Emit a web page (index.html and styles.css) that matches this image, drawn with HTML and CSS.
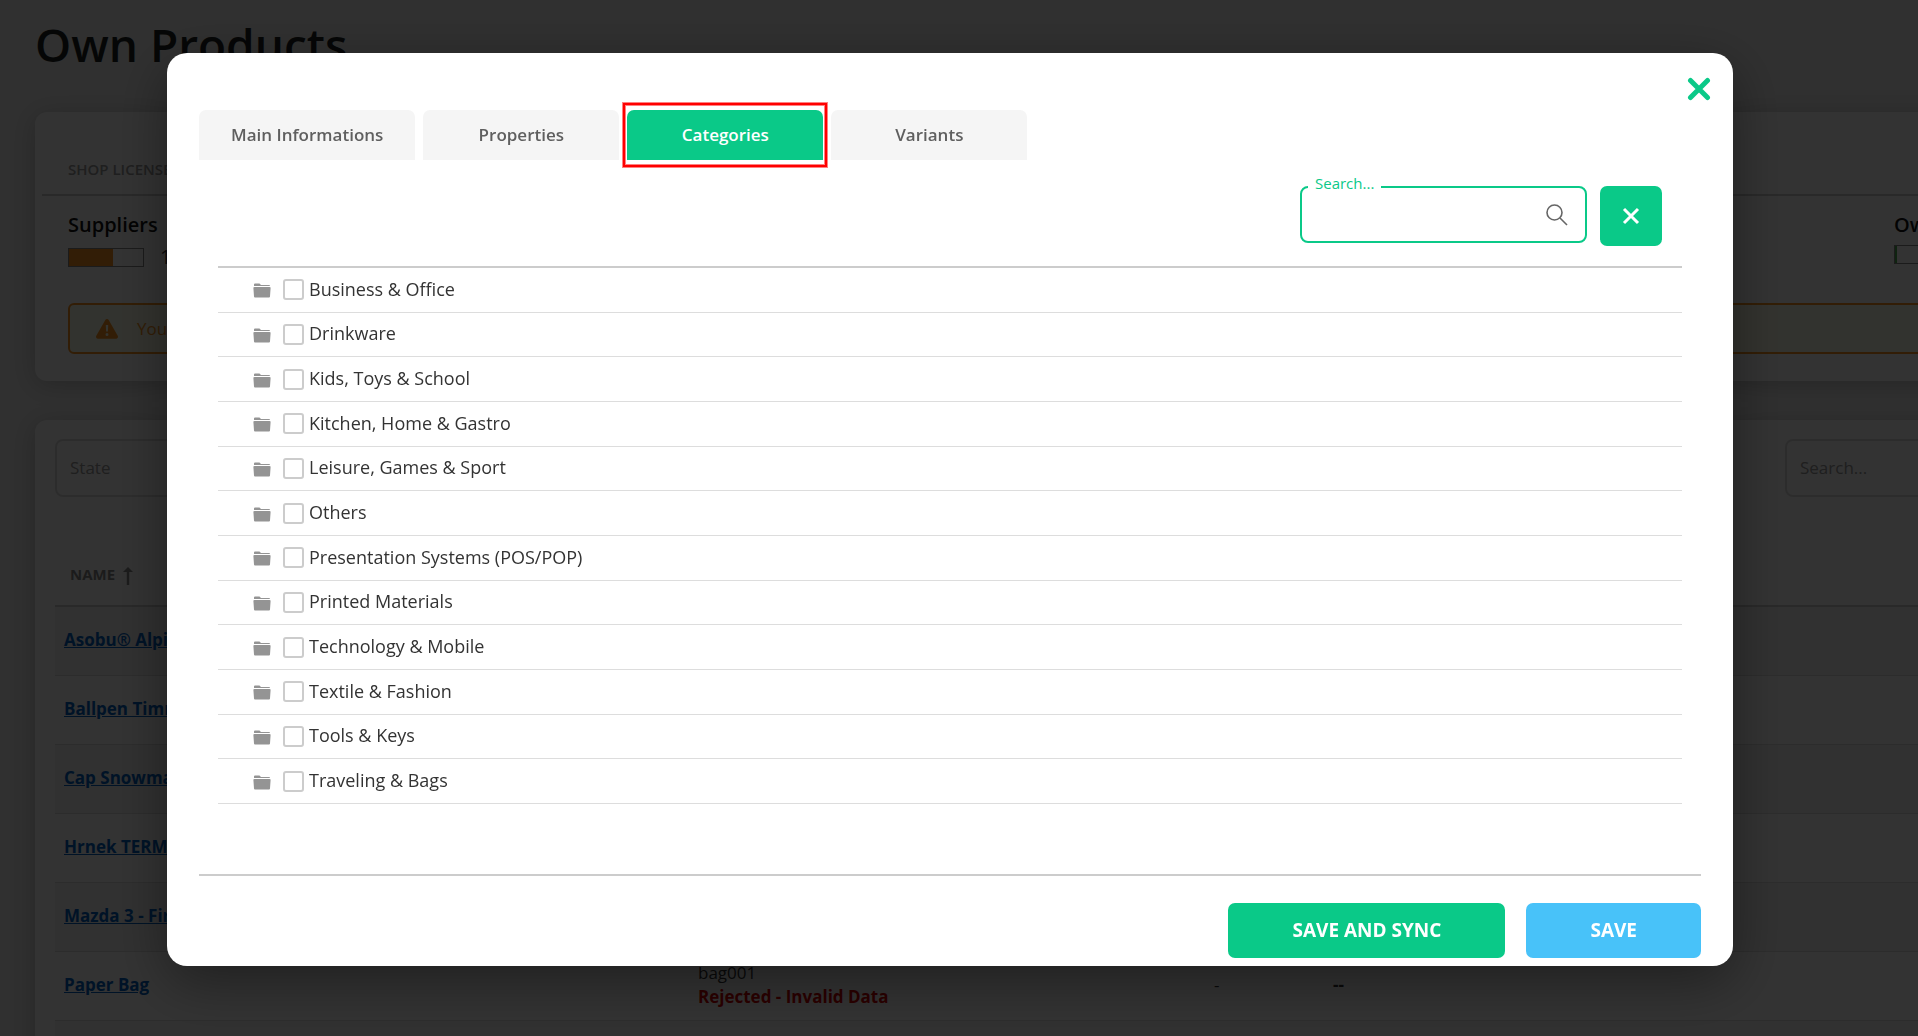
FILE: index.html
```
<!DOCTYPE html>
<html lang="en">
  <head>
    <meta charset="UTF-8">
    <meta name="viewport" content="width=device-width, initial-scale=1.0">
    <title>Own Products</title>

    <link rel="stylesheet" href="styles.css">
  </head>

  <body>
    <main class="page">
      <h1 class="page-title">Own Products</h1>

      <section class="card license">
        <h2 class="license-title">SHOP LICENSE</h2>
        <div class="license-items">
          <div class="license-item">
            <h3>Suppliers</h3>
            <div class="usage">
              <div class="bar"><div class="bar-fill" style="width: 60%"></div></div>
              <span>12 / 20</span>
            </div>
          </div>
          <div class="license-item">
            <h3>Own</h3>
            <div class="usage">
              <div class="bar bar-ok"><div class="bar-fill" style="width: 3%"></div></div>
            </div>
          </div>
        </div>
        <div class="warning">
          <svg width="22" height="20" viewBox="0 0 22 20">
            <path fill="currentColor" fill-rule="evenodd" d="M9.3 1a2 2 0 0 1 3.4 0l9 15.800a2 2 0 0 1-1.700 3H2a2 2 0 0 1-1.700-3zM9.800 6l.3 6.500h1.800l.3-6.500zM11 14a1.500 1.500 0 1 0 0 3a1.500 1.500 0 0 0 0-3z"/>
          </svg>
          <span>You</span>
        </div>
      </section>

      <section class="card products">
        <div class="filters">
          <input class="filter" type="text" placeholder="State" aria-label="State">
          <input class="filter" type="text" placeholder="Search..." aria-label="Search products">
        </div>
        <table class="product-table">
          <thead>
            <tr>
              <th class="col-name">NAME
                <svg width="10" height="18" viewBox="0 0 10 18"><path d="M5 18V3" stroke="currentColor" stroke-width="2.500"/><path d="M5 0L10 5H0Z" fill="currentColor"/></svg>
              </th>
              <th class="col-code"></th>
              <th class="col-stock"></th>
              <th></th>
            </tr>
          </thead>
          <tbody>
            <tr><td><a href="#">Asobu® Alpine</a></td><td></td><td></td><td></td></tr>
            <tr><td><a href="#">Ballpen Timmy</a></td><td></td><td></td><td></td></tr>
            <tr><td><a href="#">Cap Snowman</a></td><td></td><td></td><td></td></tr>
            <tr><td><a href="#">Hrnek TERMO</a></td><td></td><td></td><td></td></tr>
            <tr><td><a href="#">Mazda 3 - Firm</a></td><td></td><td></td><td></td></tr>
            <tr>
              <td><a href="#">Paper Bag</a></td>
              <td>bag001<br><strong class="rejected">Rejected - Invalid Data</strong></td>
              <td>-</td>
              <td><strong>--</strong></td>
            </tr>
            <tr><td></td><td>123<br>&nbsp;</td><td></td><td></td></tr>
          </tbody>
        </table>
      </section>
    </main>

    <div class="overlay">
      <div class="modal" role="dialog" aria-label="Edit product">
        <button class="close" type="button" aria-label="Close">
          <svg width="24" height="24" viewBox="0 0 24 24"><path d="M3.500 3.500L20.500 20.500M20.500 3.500L3.500 20.500" stroke="currentColor" stroke-width="5" stroke-linecap="round"/></svg>
        </button>

        <nav class="tabs">
          <button class="tab" type="button">Main Informations</button>
          <button class="tab" type="button">Properties</button>
          <button class="tab active" type="button">Categories</button>
          <button class="tab" type="button">Variants</button>
        </nav>

        <div class="content">
          <div class="search-row">
            <div class="search">
              <label for="category-search">Search...</label>
              <input id="category-search" type="text">
              <svg width="22" height="22" viewBox="0 0 22 22"><g fill="none" stroke="currentColor" stroke-width="1.600"><circle cx="8.500" cy="8.500" r="7.500"/><path d="M14 14L21 21"/></g></svg>
            </div>
            <button class="clear" type="button" aria-label="Clear search">
              <svg width="18" height="18" viewBox="0 0 18 18"><path d="M2 2L16 16M16 2L2 16" stroke="currentColor" stroke-width="3"/></svg>
            </button>
          </div>

          <ul class="categories" id="categories"></ul>
        </div>

        <div class="actions">
          <button class="btn btn-sync" type="button">SAVE AND SYNC</button>
          <button class="btn btn-save" type="button">SAVE</button>
        </div>
      </div>
    </div>

    <script>
      const categories = [
        'Business & Office',
        'Drinkware',
        'Kids, Toys & School',
        'Kitchen, Home & Gastro',
        'Leisure, Games & Sport',
        'Others',
        'Presentation Systems (POS/POP)',
        'Printed Materials',
        'Technology & Mobile',
        'Textile & Fashion',
        'Tools & Keys',
        'Traveling & Bags',
      ];
      const folderIcon = '<svg width="18" height="15" viewBox="0 0 18 15"><path fill="currentColor" d="M1 3V1.500Q1 .5 2 .5H6.500L8 2H16Q17 2 17 3ZM1.500 4H16.500Q17.700 4 17.600 5L17 13.500Q17 14.500 16 14.500H2Q1 14.500 1 13.500L.4 5Q.3 4 1.500 4Z"/></svg>';

      categories.forEach((name, index) => {
        const item = document.createElement('li');
        item.className = 'category';
        item.innerHTML = `${folderIcon}<input type="checkbox" id="category${index}"><label for="category${index}"></label>`;
        item.querySelector('label').innerText = name;
        document.querySelector('#categories').appendChild(item);
      });
    </script>
  </body>
</html>
```
FILE: styles.css
```
* {
  box-sizing: border-box;
}

body {
  margin: 0;
  height: 100vh;
  overflow: hidden;
  background-color: #eee;
  color: #333;
  font-family: "Open Sans", "Noto Sans", sans-serif;
  font-size: 17px;
  line-height: 24px;
}

button, input {
  font: inherit;
  color: inherit;
}

button {
  border: 0;
  padding: 0;
  cursor: pointer;
}

svg {
  display: block;
  flex: none;
}

/* Page behind the dialog */
.page {
  padding: 12px 0 0 35px;
}

.page-title {
  margin: 0 0 36px 0;
  color: #1c1f22;
  font-size: 46px;
  font-weight: 600;
  line-height: 64px;
}

.card {
  margin-right: -35px;
  border-radius: 12px;
  background-color: #fff;
  box-shadow: 0 4px 24px rgba(0, 0, 0, 0.2);
}

.license {
  height: 269px;
  margin-bottom: 39px;
  padding: 45px 0 0 7px;
}

.license-title {
  margin: 0;
  padding: 0 0 13px 26px;
  border-bottom: 2px solid #ccc;
  color: #999;
  font-size: 15px;
  font-weight: 600;
}

.license-items {
  display: flex;
  justify-content: space-between;
  padding: 17px 0 0 26px;
}

.license-item {
  width: 94px;
  white-space: nowrap;
}

.license-item:last-child {
  width: 59px;
}

.license-item h3 {
  margin: 0 0 8px;
  color: #111;
  font-size: 20px;
  font-weight: 600;
}

.usage {
  display: flex;
  align-items: center;
  gap: 16px;
  font-size: 20px;
}

.bar {
  flex: none;
  width: 76px;
  height: 19px;
  border: 1px solid #888;
}

.bar-fill {
  height: 100%;
  background-color: #f7931e;
}

.bar-ok .bar-fill {
  background-color: #4caf50;
}

.warning {
  display: flex;
  align-items: center;
  gap: 19px;
  height: 51px;
  margin: 34px 0 0 26px;
  padding: 0 26px;
  border: 2px solid #f7931e;
  border-radius: 6px;
  background-color: #fbfde8;
  color: #f7931e;
}

.products {
  height: 700px;
  padding: 19px 0 0 20px;
}

.filters {
  display: flex;
  justify-content: space-between;
}

.filter {
  width: 260px;
  height: 58px;
  padding: 0 13px 2px;
  border: 2px solid #ddd;
  border-radius: 8px;
  background: none;
}

.filter:last-child {
  width: 168px;
}

.filter::placeholder {
  color: #999;
  opacity: 1;
}

.product-table {
  width: 100%;
  margin-top: 48px;
  border-collapse: separate;
  border-spacing: 0;
  table-layout: fixed;
}

.product-table th {
  height: 62px;
  padding: 0 15px 2px;
  border-bottom: 2px solid #ccc;
  color: #888;
  font-size: 15px;
  text-align: left;
}

.product-table th svg {
  display: inline-block;
  margin-left: 4px;
  vertical-align: middle;
}

.product-table td {
  height: 69px;
  padding: 0 9px 2px;
  border-bottom: 1px solid #ddd;
}

.product-table tbody tr:nth-child(odd) {
  background-color: #f4f4f4;
}

.product-table .col-name {
  width: 634px;
}

.product-table .col-code {
  width: 516px;
}

.product-table .col-stock {
  width: 119px;
}

.product-table a {
  color: #0060c0;
  font-weight: 700;
}

.rejected {
  color: #d00000;
}

/* Dialog */
.overlay {
  position: fixed;
  inset: 0;
  padding: 53px 185px 70px 167px;
  background-color: rgba(0, 0, 0, 0.8);
}

.modal {
  position: relative;
  padding: 57px 32px 8px;
  border-radius: 20px;
  background-color: #fff;
  box-shadow: 0 16px 56px rgba(0, 0, 0, 0.4);
}

.close {
  position: absolute;
  top: 24px;
  right: 22px;
  background: none;
  color: #0ac988;
}

.tabs {
  display: flex;
  gap: 8px;
}

.tab {
  min-width: 196px;
  height: 50px;
  padding: 0 32px;
  border-radius: 7px 7px 0 0;
  background-color: #f5f5f5;
  color: #5f5f5f;
  font-weight: 600;
}

.tab.active {
  position: relative;
  background-color: #0ac988;
  color: #fff;
}

.tab.active::after {
  content: "";
  position: absolute;
  inset: -7px -4px;
  border: 2px solid #f00;
  box-shadow: 0 0 0 1px #ff8080, inset 0 0 0 1px #ff8080;
}

.content {
  padding: 26px 19px 70px;
}

.search-row {
  display: flex;
  justify-content: flex-end;
  align-items: flex-start;
  gap: 13px;
  padding: 0 20px 20px;
}

.search {
  position: relative;
  width: 287px;
}

.search input {
  display: block;
  width: 100%;
  height: 57px;
  padding: 0 56px 0 16px;
  border: 2px solid #0ac988;
  border-radius: 8px;
  outline: 0;
}

.search label {
  position: absolute;
  top: -15px;
  left: 8px;
  padding: 0 7px;
  background-color: #fff;
  color: #0ac988;
  font-size: 15px;
}

.search svg {
  position: absolute;
  top: 18px;
  right: 19px;
  color: #666;
}

.clear {
  display: flex;
  align-items: center;
  justify-content: center;
  width: 62px;
  height: 60px;
  border-radius: 7px;
  background-color: #0ac988;
  color: #fff;
}

.categories {
  display: grid;
  grid-auto-rows: 1fr;
  min-height: 538px;
  margin: 0;
  padding: 0;
  border-top: 2px solid #ccc;
  list-style: none;
}

.category {
  display: flex;
  align-items: center;
  padding: 0 35px;
  border-bottom: 1px solid #ddd;
}

.category svg {
  margin: 2px 12px 0 0;
  color: #949494;
}

.category input {
  appearance: none;
  width: 21px;
  height: 21px;
  margin: 0 5px 0 0;
  border: 2px solid #ccc;
  border-radius: 3px;
  background-color: #fff;
}

.category label {
  padding-bottom: 2px;
  font-size: 18px;
}

.actions {
  display: flex;
  justify-content: flex-end;
  gap: 21px;
  padding-top: 27px;
  border-top: 2px solid #ccc;
}

.btn {
  height: 55px;
  padding: 0 64px 2px;
  border-radius: 7px;
  color: #fff;
  font-size: 19px;
  font-weight: 700;
}

.btn-sync {
  background-color: #0ac988;
}

.btn-save {
  background-color: #48c2f9;
}
```
